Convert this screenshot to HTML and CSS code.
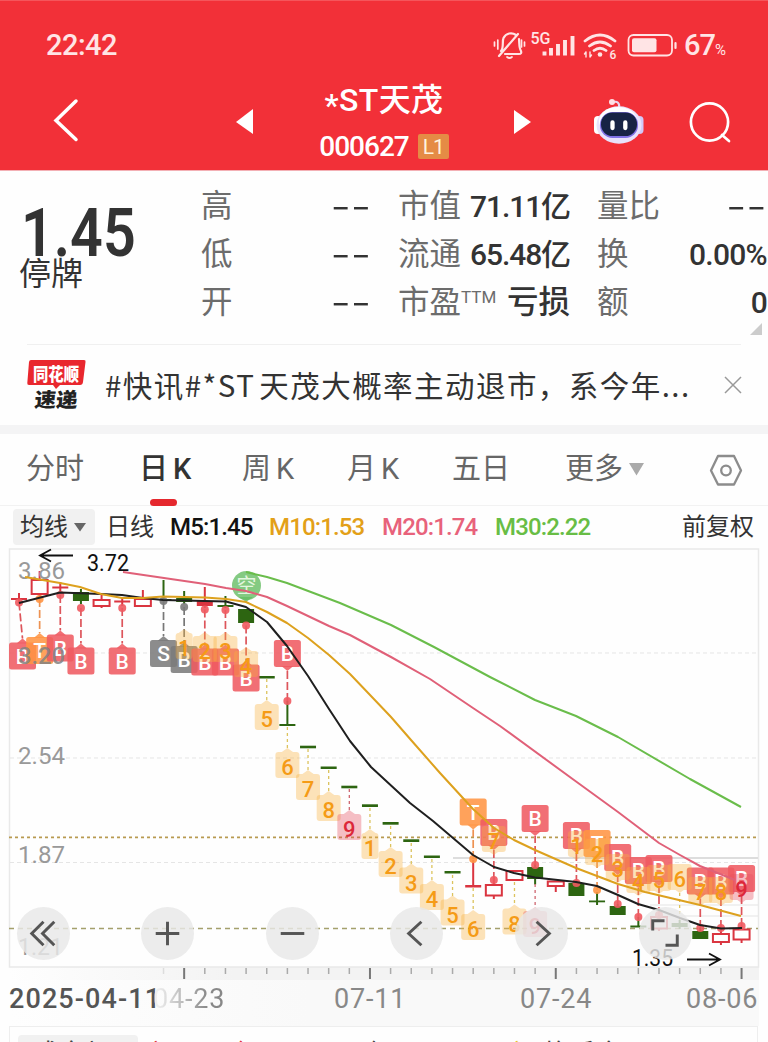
FILE: index.html
```html
<!DOCTYPE html>
<html lang="zh-CN">
<head>
<meta charset="utf-8">
<title>*ST天茂 000627</title>
<link rel="stylesheet" href="styles.css">
</head>
<body>
<header class="header">
  <div class="status">
    <span class="clock">22:42</span>
    <svg class="status-icons" width="190" height="34" viewBox="490 28 190 34" fill="none" stroke="#ffe4e5" stroke-width="2.2" stroke-linecap="round">
      <path d="M501 51C504 48 502 41 503.500 38C506 33 512 32 516 35M519 39C519.500 45 519 48 521 51Q522 54 519 54H505M499 56L518 34" />
      <path d="M507 57Q509.500 59 512 57M494.500 42V46M497.800 40V49M521.500 40V47M524.500 42V46" stroke-width="1.700"/>
      <text x="530.500" y="44" class="net" textLength="20">5G</text>
      <path d="M544.500 51.500V55.500M551 48V55.500M558 44V55.500M565 40V55.500M572.500 36V55.500" stroke-width="3.900" stroke-linecap="butt"/>
      <path d="M585 41Q600 29 615 41M589.500 46Q600 38 610.500 46M594 50.500Q600 46 606 50.500" stroke-width="2.800"/>
      <circle cx="600" cy="54.500" r="2.300" fill="#ffe4e5" stroke="none"/>
      <path d="M586 57V52M584.500 54L586 52M590 52V57M591.500 55L590 57" stroke-width="1.400"/>
      <text x="609.500" y="58.500" class="wifi-six">6</text>
      <rect x="628.500" y="35" width="43.500" height="20.500" rx="5" stroke-width="1.800"/>
      <rect x="632" y="38.300" width="24.500" height="14" rx="2" fill="#ffe4e5" stroke="none"/>
      <path d="M675.500 43V48"/>
    </svg>
    <span class="battery">67<small>%</small></span>
  </div>
  <div class="nav">
    <svg width="30" height="50" viewBox="50 95 30 50" fill="none" stroke="#fff" stroke-width="3.500" stroke-linecap="round"><path d="M76 101L56 120.500L76 139.500"/></svg>
    <svg class="prev" width="20" height="26" viewBox="0 0 20 26"><path d="M1 13L18 0V25Z" fill="#fff"/></svg>
    <div class="title"><h1><span>*</span>ST天茂</h1><p>000627<b>L1</b></p></div>
    <svg class="next" width="20" height="26" viewBox="0 0 20 26"><path d="M18 13L1 1V25Z" fill="#fff"/></svg>
    <svg class="robot" width="52" height="50" viewBox="593 96 52 50">
      <path d="M612 102C617 99 620 102 619 107" fill="none" stroke="#e9d6ef" stroke-width="2.200"/><circle cx="612" cy="101" r="3" fill="#ffdfe4"/>
      <rect x="594" y="115" width="8" height="18" rx="4" fill="#fff"/><rect x="635.500" y="115" width="8" height="18" rx="4" fill="#d2c8f8"/>
      <ellipse cx="619" cy="124" rx="22.500" ry="18.800" fill="#e8e2fb"/><ellipse cx="618" cy="120" rx="19" ry="14" fill="#fff"/>
      <rect x="600" y="111" width="38" height="26" rx="12.500" fill="#8172e5"/><rect x="601" y="111.500" width="36" height="23.500" rx="11.500" fill="#172344"/>
      <path d="M612.500 121.500V127M625.300 121.500V127" stroke="#fff" stroke-width="4.300" stroke-linecap="round"/>
    </svg>
    <svg class="search" width="44" height="44" viewBox="688 99 44 44" fill="none" stroke="#fff" stroke-width="2.700" stroke-linecap="round"><circle cx="709.500" cy="121" r="18.600"/><path d="M722 134L729 140"/></svg>
  </div>
</header>

<section class="quote">
  <div class="price"><strong>1.45</strong><span>停牌</span></div>
  <dl class="col high">
    <dt>高</dt><dd class="none">--</dd>
    <dt>低</dt><dd class="none">--</dd>
    <dt>开</dt><dd class="none">--</dd>
  </dl>
  <dl class="col cap">
    <dt>市值</dt><dd>71.11亿</dd>
    <dt>流通</dt><dd>65.48亿</dd>
    <dt>市盈<sup>TTM</sup></dt><dd class="loss">亏损</dd>
  </dl>
  <dl class="col ratio">
    <dt>量比</dt><dd class="none">--</dd>
    <dt>换</dt><dd>0.00%</dd>
    <dt>额</dt><dd>0</dd>
  </dl>
</section>
<div class="fold"><svg width="12" height="12" viewBox="0 0 12 12"><path d="M0 12L12 0V12Z" fill="#ccc"/></svg></div>

<section class="news">
  <svg class="flash" width="60" height="54" viewBox="26 358 60 54">
    <path d="M31 360H84Q86 360 85.500 362L83 382Q82.700 385 80 385H60L56 389L53 385H29Q27 385 27.300 383L29 362Q29.300 360 31 360Z" fill="#e9272e"/>
    <text x="33" y="380.500" class="flash-top" textLength="46" lengthAdjust="spacingAndGlyphs">同花顺</text>
    <text class="flash-bottom" transform="translate(34 407) skewX(-5)" textLength="43" lengthAdjust="spacingAndGlyphs">速递</text>
  </svg>
  <p>#快讯#*ST<i></i>天茂大概率主动退市，系今年...</p>
  <svg width="18" height="18" viewBox="0 0 18 18" stroke="#999" stroke-width="1.500"><path d="M1 1L17 17M17 1L1 17"/></svg>
</section>

<nav class="tabs">
  <a>分时</a><a class="active">日<i></i>K</a><a>周<i></i>K</a><a>月<i></i>K</a><a>五日</a>
  <a class="more">更多<svg width="15" height="13" viewBox="0 0 15 13"><path d="M0 0H15L7.500 12.500Z" fill="#aaa"/></svg></a>
  <svg class="gear" width="34" height="34" viewBox="708 453 34 34" fill="none" stroke="#8c8c8c" stroke-width="2.300" stroke-linejoin="round"><path d="M717 456H733L740 470.500L733 484.500H717L710 470.500Z"/><circle cx="725" cy="470.500" r="4.800"/></svg>
</nav>

<section class="legend">
  <span class="picker">均线<svg width="12" height="9" viewBox="0 0 12 9"><path d="M0 0H12L6 8.500Z" fill="#666"/></svg></span>
  <span class="period">日线</span>
  <span class="m m5">M5:1.45</span><span class="m m10">M10:1.53</span><span class="m m20">M20:1.74</span><span class="m m30">M30:2.22</span>
  <span class="adjust">前复权</span>
</section>

<section class="chart">
  <svg id="kline" width="768" height="432" viewBox="0 548 768 432"></svg>
  <div class="controls">
    <button><svg viewBox="0 0 54 54"><path d="M27 15L15 27L27 39M38 15L26 27L38 39"/></svg></button>
    <button><svg viewBox="0 0 54 54"><path d="M15 27H39M27 15V39"/></svg></button>
    <button><svg viewBox="0 0 54 54"><path d="M15 27H39"/></svg></button>
    <button><svg viewBox="0 0 54 54"><path d="M32 15L19 27L32 39"/></svg></button>
    <button><svg viewBox="0 0 54 54"><path d="M22 15L35 27L22 39"/></svg></button>
    <button><svg viewBox="0 0 54 54"><path d="M14 24V14H26M39 28V39H27"/></svg></button>
  </div>
  <div class="dates">
    <span class="start">2025-04-11</span><span class="faded">04-23</span><span class="d2">07-11</span><span class="d3">07-24</span><span class="d4">08-06</span>
  </div>
</section>
<section class="volume">
  <span class="vol-picker">成交额</span><span class="up">额</span><span class="up unit">亿</span><span class="dark">亿</span><span class="yellow">额</span><span class="turnover">换手率</span>
</section>
<script src="chart.js"></script>
</body>
</html>
```
FILE: styles.css
```css
* { box-sizing: border-box; }
body {
  margin: 0; width: 768px; height: 1042px; overflow: hidden; background: #fefefe; color: #333;
  font-family: Roboto, "Noto Sans CJK SC", sans-serif;
  display: flex; flex-direction: column;
}
body > * { flex-shrink: 0; }
h1, p, dl, dd { margin: 0; }
svg { display: block; flex: none; }

.header { height: 170px; background: #f23038; color: #fff; border-top: 1px solid #f5555b; }
.status { height: 84px; padding: 4px 0 0 46px; display: flex; align-items: center; color: #ffe4e5; }
.clock { width: 444px; font-size: 29px; letter-spacing: -.5px; font-weight: 500; }
.status-icons text { fill: #ffe4e5; stroke: none; font-weight: 500; }
.net { font-size: 16px; }
.wifi-six { font-size: 12px; }
.battery { font-size: 29px; margin-left: 4px; letter-spacing: -1px; font-weight: 500; }
.battery small { font-size: 15px; font-weight: 400; }
.nav { height: 86px; padding-left: 50px; display: flex; }
.nav > svg:first-child { margin-top: 10px; }
.prev { margin: 24px 0 0 155px; }
.title { width: 248px; margin-left: 5px; text-align: center; }
.title h1 { font-size: 32px; font-weight: 500; line-height: 31px; letter-spacing: .4px; white-space: nowrap; }
.title h1 span { display: inline-block; line-height: 20px; vertical-align: -5px; }
.title p { font-size: 28px; line-height: 31px; margin-top: 15px; display: flex; justify-content: center; align-items: center; letter-spacing: -1px; font-weight: 500; }
.title b { margin-left: 9px; width: 31px; height: 25px; line-height: 26px; border-radius: 2px; background: #e58b45; color: #fff3df; font-size: 21px; font-weight: 400; }
.next { margin: 24px 0 0 5px; }
.robot { margin: 12px 0 0 60px; }
.search { margin: 15px 0 0 43px; }

.quote { height: 146px; display: flex; border-top: 1px solid #f3b0b5; }
.price { width: 201px; padding: 31px 0 0 19px; }
.price strong { display: block; height: 55px; margin-left: 2px; font-size: 66px; line-height: 64px; font-weight: 600; transform: scaleX(.87); transform-origin: left; }
.price span { display: block; font-size: 32px; line-height: 34px; }
.col { padding-top: 12px; display: grid; grid-template-columns: auto 1fr; grid-auto-rows: 48px; line-height: 48px; font-size: 31.500px; white-space: nowrap; }
.col dt { color: #6c6c6c; font-weight: 400; }
.col dd { text-align: right; font-size: 30px; font-weight: 500; }
.col .none { font-family: "Noto Sans CJK SC", sans-serif; font-weight: 400; font-size: 35px; line-height: 40px; letter-spacing: .8px; transform: scaleX(1.55); transform-origin: right; }
.high { width: 170px; }
.cap { width: 172px; margin-left: 27px; }
.cap dd { letter-spacing: -1.100px; }
.cap .loss { letter-spacing: 0; font-size: 31.500px; }
.col sup { display: inline-block; width: 0; font-size: 17px; line-height: 10px; vertical-align: 10px; }
.ratio { width: 170px; margin-left: 27px; }
.ratio dd { letter-spacing: -.7px; }
.fold { height: 29px; padding: 7px 6px 0 0; margin: 0 0 0 27px; display: flex; justify-content: flex-end; background: linear-gradient(#f0f0f0, #f0f0f0) 0 28px / 714px 1px no-repeat; }

.news { height: 80px; padding-left: 26px; display: flex; align-items: center; }
.news p { width: 599px; margin: -3px 0 0 19px; font-size: 29.500px; letter-spacing: 1.450px; white-space: nowrap; font-family: "Noto Sans CJK SC", sans-serif; font-weight: 400; }
.news p i { display: inline-block; width: 4px; }
.news > svg:last-child { margin-left: 20px; }
.flash-top { fill: #fff; font: 900 18px "Noto Sans CJK SC"; }
.flash-bottom { fill: #222; font: 900 20px "Noto Sans CJK SC"; }

.tabs { height: 81px; padding-left: 26px; border-top: 9px solid #f4f4f5; border-bottom: 1px solid #f2f2f2; display: flex; font-size: 29px; line-height: 71px; color: #666; }
.tabs a { position: relative; width: 113px; white-space: nowrap; }
.tabs a:nth-child(2) { width: 103px; }
.tabs a:nth-child(3), .tabs a:nth-child(4) { width: 105px; }
.tabs a i { display: inline-block; width: 5px; }
.tabs .active { color: #333; font-weight: 500; }
.tabs .active::after { content: ""; position: absolute; left: 11px; bottom: -1px; width: 27px; height: 7px; border-radius: 4px; background: #e5282e; }
.tabs .more { width: 144px; display: flex; align-items: center; gap: 6px; }
.gear { margin-top: 19px; }

.legend { height: 42px; padding-left: 13px; display: flex; align-items: center; font-size: 24px; white-space: nowrap; line-height: 34px; }
.picker { width: 82px; height: 36px; padding-left: 7px; display: flex; align-items: center; gap: 6px; border-radius: 4px; background: #f1f1f1; }
.period { width: 64px; margin-left: 11px; }
.m { font-size: 24px; font-weight: 500; letter-spacing: -.85px; }
.m5 { width: 99px; color: #111; }
.m10 { width: 113px; color: #e3a018; }
.m20 { width: 113px; color: #e8627b; }
.m30 { width: 187px; color: #68bd45; }

.chart { position: relative; height: 478px; }
#kline text { font-family: Roboto, "Noto Sans CJK SC", sans-serif; }
.controls { position: absolute; left: 17px; top: 359px; display: flex; gap: 71.400px; }
.controls button { width: 53px; height: 53px; padding: 0; border: 0; border-radius: 50%; background: rgba(232,232,232,.82); }
.controls svg { width: 53px; height: 53px; fill: none; stroke: #555; stroke-width: 3; }
.dates { height: 46px; padding-left: 9px; display: flex; font-size: 27px; line-height: 38px; color: #888; letter-spacing: .8px; white-space: nowrap; background: linear-gradient(90deg, #fefefe, #f9f9f9 40%) 9px 0 / 750px 100% no-repeat; }
.dates span { width: 186px; }
.dates .start { width: 144px; color: #555; font-size: 27px; letter-spacing: 1.100px; font-weight: 500; }
.dates .faded { width: 181px; background: linear-gradient(90deg, #eee 5px, #888 55px); background-clip: text; color: transparent; }
.dates .d3 { width: 166px; }
.dates .d4 { width: 80px; }

.volume { height: 16px; margin: 0 10px 0 9px; border: 1px solid #eee; border-bottom: 0; overflow: hidden; display: flex; padding: 8px 0 0 8px; font-size: 26px; line-height: 38px; color: #444; white-space: nowrap; }
.vol-picker { width: 120px; height: 34px; padding-left: 15px; background: #f1f1f1; border-radius: 4px; }
.up { margin-left: 11px; color: #e33a40; }
.unit { margin-left: 58px; }
.dark { margin-left: 107px; }
.yellow { margin-left: 118px; color: #e9c52e; }
.turnover { margin-left: 8px; }
```
FILE: chart.js
```js
const RED = '#da3540', GREEN = '#2d6511', PIN = '#ef5a60', GRAY = '#7b7b7b', ORANGE = '#ff9443';
const x = i => 19 + 20.645 * i;
let out = '';
const line = (x1, y1, x2, y2, c, w = 2, dash = '') =>
  out += `<line x1="${x1}" y1="${y1}" x2="${x2}" y2="${y2}" stroke="${c}" stroke-width="${w}" stroke-dasharray="${dash}"/>`;
const text = (tx, ty, s, c, size, len, weight = 400) =>
  out += `<text x="${tx}" y="${ty}" fill="${c}" font-size="${size}" font-weight="${weight}" ${len ? `textLength="${len}" lengthAdjust="spacingAndGlyphs"` : 'text-anchor="middle"'}>${s}</text>`;

// Axis strip, frame and price grid
out += '<defs><linearGradient id="strip"><stop offset="0" stop-color="#fefefe"/><stop offset=".3" stop-color="#f3f3f3"/></linearGradient></defs>';
out += '<rect x="9" y="967" width="750" height="13" fill="url(#strip)"/><rect x="9.500" y="549" width="749" height="418" fill="#fefefe" stroke="#e9e9e9" stroke-width="1.500"/>';
[653, 758, 862.5].forEach(y => line(10, y, 758, y, '#e5e5e5', 1, '4 3'));
line(453, 858, 758, 858, '#dddddd', 1.8);
line(650, 905, 758, 905, '#e4e4e4', 1.2);
line(650, 916, 758, 916, '#e4e4e4', 1.2);
line(9, 837.3, 758, 837.3, '#b89a50', 1.8, '3 3');
line(9, 928.5, 758, 928.5, '#a4a06c', 1.5, '5 4');
for (let i = 7; i < 36; i++) {
  const major = [8, 17, 26, 35].includes(i);
  line(x(i), 968, x(i), major ? 979 : 974, i === 7 ? '#ddd' : major ? '#777' : '#aaa', major ? 2 : 1.5);
}

// Candles: index, kind (h hollow, r red, g green), body top, body bottom, low-high wick
[
  [0,'r',598,600,593,604],[1,'h',580,594,571,598],[2,'r',586.5,588.5,582,591],[3,'g',592,601,589,604],[4,'h',600,606,595,608],
  [5,'r',600.5,602.5,597,606],[6,'h',599,606,590,606],[7,'g',599,600,580,601],[8,'g',598,602,591,604],[9,'r',601,606,587,608],
  [10,'g',605,607,596,608],[11,'g',609,623,609,623],[12,'g',676,678.5,677,677],[13,'g',724,726,701,725],[14,'g',745.7,748.3,747,747],
  [15,'g',766.5,769,767,767],[16,'g',785.7,788.3,787,787],[17,'g',804.3,807,805,805],[18,'g',822,824.7,823,823],[19,'g',839.3,842,840,840],
  [20,'g',855.5,858,857,857],[21,'g',871,873.5,872,872],[22,'r',885,887.5,860,886],[23,'h',885,895.5,877,899],[24,'h',871,880,871,880],
  [25,'g',867,879,864,884.5],[26,'h',881.5,886,881,892],[27,'g',883,896,881,896],[28,'g',900.5,902.3,892,905],[29,'g',906,915,904,915],
  [30,'g',925.5,927.5,917,927],[31,'h',917,928.5,914,931],[32,'g',923,927,920,929],[33,'g',931,939,928,939],[34,'h',934,942,928,945],[35,'h',929.5,939.5,926,943]
].forEach(([i, k, a, b, lo, hi]) => {
  const c = k === 'g' ? GREEN : RED;
  line(x(i), lo, x(i), hi, c, 2);
  out += `<rect x="${x(i) - 8}" y="${a}" width="16" height="${b - a}" fill="${k === 'h' ? '#fff' : c}" ${k === 'h' ? `stroke="${c}" stroke-width="2"` : ''}/>`;
});

text(18, 579, '3.86', '#999', 24, 47);
text(18, 763.5, '2.54', '#999', 24, 47);
text(18, 862.5, '1.87', '#999', 24, 47);
text(18, 955, '1.21', '#999', 24, 45);

// Signal pins: index, letter, box top, anchor dot y, colour, above the candle
const pins = [
  [0,'B',642.5,602.5,PIN,0],[1,'T',637,599,ORANGE,0],[2,'B',634.5,595,PIN,0],[3,'B',647.5,608,PIN,0],[5,'B',647.5,608,PIN,0],
  [7,'S',640,601,GRAY,0],[8,'B',646,607,GRAY,0],[9,'B',648.5,609.5,PIN,0],[10,'B',648.5,610,PIN,0],[11,'B',664.5,625.5,PIN,0],
  [13,'B',640,701,PIN,1],[22,'T',798.5,859,ORANGE,1],[23,'B',819,880,PIN,1],[25,'B',805,865,PIN,1],[27,'B',822,883,PIN,1],
  [28,'T',830,890,ORANGE,1],[29,'B',844,904,PIN,1],[30,'B',857,917,PIN,1],[31,'B',855,915,PIN,1],[33,'B',867.5,928,PIN,1],
  [34,'B',867.5,928,PIN,1],[35,'B',865,926,PIN,1]
];
pins.forEach(([i, s, top, dot, c, above]) => {
  const cx = i ? x(i) : 22.5, edge = above ? top + 27 : top;
  const tip = above ? edge + 4 : edge - 4, side = above ? -1 : 1;
  line(x(i), dot, cx, tip, c === GRAY ? '#777' : c === ORANGE ? '#ed9252' : '#dd555b', 1.7, '8 3');
  out += `<circle cx="${x(i)}" cy="${dot}" r="4" fill="${c}" opacity=".9"/>`;
  out += `<path d="M${cx - 6} ${edge + side}L${cx} ${tip}L${cx + 6} ${edge + side}Z" fill="${c}" opacity=".87"/>`;
  out += `<rect x="${cx - 13.5}" y="${top}" width="27" height="27" rx="2.500" fill="${c}" opacity=".87"/>`;
  text(cx, top + 21, s, '#fff', 21, 0, 500);
});
text(18, 664, '3.20', 'rgba(130,130,130,.85)', 24, 47, 500);

// Sequence counters: index, digit, digit centre, above, dotted line start
[
  [8,1,648,0,0],[9,2,651,0,0],[10,3,651,0,0],[11,4,666,0,0],[12,5,719,0,679],[13,6,767,0,727],[14,7,789,0,749],[15,8,810,0,770],
  [16,9,829,0,789],[17,1,848,0,808],[18,2,866,0,826],[19,3,882.5,0,843],[20,4,899,0,859],[21,5,914.5,0,875],[22,6,929,0,888],[23,7,841,1,0],
  [24,8,923.5,0,882],[25,9,926,0,884],[27,1,846,1,0],[28,2,854,1,0],[29,3,869,1,0],[30,4,882,1,0],[31,5,880,1,0],[32,6,879,1,0],
  [33,7,892,1,0],[34,8,892,1,0],[35,9,889,1,0]
].forEach(([i, n, cy, above, from]) => {
  const nine = n === 9, c = nine ? '#e6505f' : '#f9b13e', w = n === 1 ? 8.5 : 12, cx = x(i);
  const top = cy - 15, peak = above ? cy + 14 : cy - 19, edge = above ? cy + 9 : cy - 14;
  if (from) line(cx, from, cx, cy - 18, nine ? '#cf6670' : '#dcc35d', 1.3, '3 3');
  if (i === 32) line(cx, 893, cx, 920, '#dcc35d', 1.3, '3 3');
  out += `<g opacity=".36" fill="${c}"><rect x="${cx - w}" y="${top}" width="${2 * w}" height="26" rx="3"/><path d="M${cx - 7} ${edge}L${cx} ${peak}L${cx + 7} ${edge}Z"/></g>`;
  text(cx, cy + 8, n, nine ? '#dc2739' : '#f59b16', 22, 0, 500);
});

// Bearish badge
out += '<circle cx="246.500" cy="585.500" r="14.500" fill="#65bd63" opacity=".8"/><path d="M239 597L246 602L253 597Z" fill="#65bd63" opacity=".8"/>';
text(246.5, 592.5, '空', '#e3f6df', 20);

const curve = (points, color) => out += `<polyline points="${points}" fill="none" stroke="${color}" stroke-width="2" stroke-linejoin="round"/>`;
curve('19,603 60,592.5 101,594 122,595 143,598 163,600 226,601.5 246,607 267,622 287,646 308,676 329,709 350,741 371,767 410,803 433,821 473,855 494,867 514,873 535,877.5 576,882 597,886 618,895 638,904 659,910 680,918 700,925 721,928.5 742,928', '#1f1f1f');
curve('25,577 60,583 80,587 101,594 122,598 143,598 163,596.5 205,597.5 226,599 246,602 267,612 287,623 308,638 329,655 350,674 371,696 391,717 411,740 440,773 473,809 494,828 514,840 535,850 576,868 618,884 645,892 700,905 741,916', '#dda11e');
curve('123,572 205,584 226,588 246,591 267,597 287,606 329,626 350,635 391,657 430,679 473,708 500,726 574,780 618,812 659,843 680,855 700,866 735,880', '#e06078');
curve('246,572 267,577 287,583 340,603 391,625 434,647 490,677 535,700 576,716 618,737 690,779 741,807', '#6abd4b');

text(87, 570.5, '3.72', '#111', 24, 42);
out += '<path d="M73 555.500H41M51 549.500L40 555.500L51 561.500" fill="none" stroke="#111" stroke-width="1.800"/>';
text(632, 966, '1.35', '#111', 24, 41);
out += '<path d="M687 959.500H720M709 953.500L720 959.500L709 965.500" fill="none" stroke="#111" stroke-width="1.800"/>';
document.getElementById('kline').innerHTML = out;
```
